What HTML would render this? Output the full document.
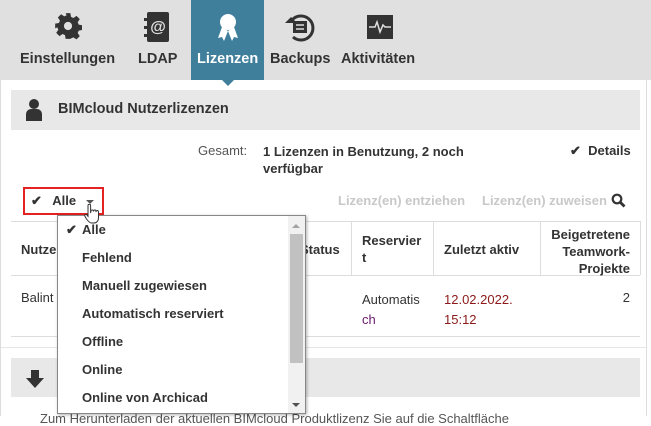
<!DOCTYPE html>
<html><head><meta charset="utf-8"><style>
*{margin:0;padding:0;box-sizing:border-box}
body{width:651px;height:416px;overflow:hidden;background:#fff;font-family:"Liberation Sans",sans-serif;color:#333;position:relative;font-size:13px}
.a{position:absolute;white-space:nowrap}
.b{font-weight:bold}
.nav{position:absolute;left:0;top:0;width:651px;height:80px;background:#e0e0e0}
.tab{position:absolute;top:51px;font-weight:bold;font-size:14.5px;color:#333}
.hl{position:absolute;background:#ddd}
.dd{position:absolute;left:57px;top:215px;width:249px;height:199px;background:#fff;border:1px solid #888;box-shadow:1px 1px 3px rgba(0,0,0,.3)}
.dd div{position:absolute;left:24px;font-weight:bold;font-size:13px;color:#333}
</style></head><body>
<div class="nav"></div>
<div class="a" style="left:191px;top:0;width:73px;height:80px;background:#3f7f9c"></div>
<div class="a" style="left:222px;top:80px;width:0;height:0;border-left:6px solid transparent;border-right:6px solid transparent;border-top:6px solid #3f7f9c"></div>
<svg class="a" style="left:54px;top:12px" width="28" height="28" viewBox="0 0 24 24"><path fill="#333" d="M10 1h4l.6 3.2 2 .9 2.7-1.8 2.8 2.8-1.8 2.7.9 2 3.2.6v4l-3.2.6-.9 2 1.8 2.7-2.8 2.8-2.7-1.8-2 .9L14 23h-4l-.6-3.2-2-.9-2.7 1.8-2.8-2.8 1.8-2.7-.9-2L1 14v-4l3.2-.6.9-2L3.3 4.7l2.8-2.8 2.7 1.8 2-.9z"/><circle cx="12" cy="12" r="3.5" fill="#e0e0e0"/></svg>
<svg class="a" style="left:143px;top:11px" width="28" height="32" viewBox="0 0 28 32"><rect x="4" y="1" width="22" height="30" rx="2" fill="#333"/><rect x="1" y="7" width="5" height="3" fill="#333"/><rect x="1" y="15" width="5" height="3" fill="#333"/><rect x="1" y="23" width="5" height="3" fill="#333"/><text x="15" y="21" font-size="16" font-weight="bold" fill="#e0e0e0" text-anchor="middle" font-family="Liberation Sans">@</text></svg>
<svg class="a" style="left:216px;top:13px" width="24" height="30" viewBox="0 0 24 30"><circle cx="12" cy="9" r="8" fill="#fff"/><path d="M6 14l-4 11 4-1 2 4 4-10zM18 14l4 11-4-1-2 4-4-10z" fill="#fff"/></svg>
<svg class="a" style="left:283px;top:11px" width="34" height="32" viewBox="0 0 34 32"><path d="M9 9a12 12 0 1 1 1 17" fill="none" stroke="#333" stroke-width="3"/><path d="M2 12l6-6 6 6z" fill="#333"/><rect x="10" y="10" width="14" height="12" fill="#333"/><path d="M13 14h8M13 18h8" stroke="#e0e0e0" stroke-width="1.5"/></svg>
<svg class="a" style="left:366px;top:14px" width="28" height="26" viewBox="0 0 28 26"><rect x="1" y="1" width="26" height="24" fill="#333"/><path d="M3 13h6l2-5 3 10 3-7 2 2h6" fill="none" stroke="#e0e0e0" stroke-width="1.5"/></svg>
<div class="tab" style="left:20px">Einstellungen</div>
<div class="tab" style="left:138px">LDAP</div>
<div class="tab" style="left:197px;color:#fff">Lizenzen</div>
<div class="tab" style="left:270px">Backups</div>
<div class="tab" style="left:341px">Aktivitäten</div>
<div class="a" style="left:0;top:80px;width:1px;height:336px;background:#ddd"></div>
<div class="a" style="left:646px;top:80px;width:1px;height:336px;background:#ddd"></div>
<div class="a" style="left:11px;top:90px;width:629px;height:40px;background:#e8e8e8"></div>
<svg class="a" style="left:25px;top:98px" width="18" height="24" viewBox="0 0 18 24"><circle cx="9" cy="6" r="5" fill="#333"/><path d="M1 23v-7a5 5 0 0 1 5-5h6a5 5 0 0 1 5 5v7z" fill="#333"/></svg>
<div class="a b" style="left:58px;top:101px;font-size:14.5px">BIMcloud Nutzerlizenzen</div>
<div class="a" style="left:198px;top:143px;color:#555">Gesamt:</div>
<div class="a b" style="left:263px;top:143px;line-height:17px">1 Lizenzen in Benutzung, 2 noch<br>verfügbar</div>
<div class="a b" style="left:570px;top:143px">✔&nbsp; Details</div>
<div class="a" style="left:23px;top:187px;width:81px;height:28px;border:2px solid #e52222"></div>
<div class="a b" style="left:31px;top:193px">✔&nbsp;&nbsp; Alle</div>
<div class="a" style="left:86px;top:200px;border-left:4px solid transparent;border-right:4px solid transparent;border-top:4px solid #555"></div>
<div class="a b" style="left:338px;top:193px;color:#c8c8c8">Lizenz(en) entziehen</div>
<div class="a b" style="left:482px;top:193px;color:#c8c8c8">Lizenz(en) zuweisen</div>
<svg class="a" style="left:611px;top:193px" width="15" height="15" viewBox="0 0 15 15"><circle cx="6" cy="6" r="4.3" fill="none" stroke="#333" stroke-width="2.2"/><path d="M9 9l4.5 4.5" stroke="#333" stroke-width="2.8"/></svg>
<div class="hl" style="left:11px;top:221px;width:629px;height:1px"></div>
<div class="hl" style="left:11px;top:275px;width:629px;height:1px"></div>
<div class="hl" style="left:11px;top:336px;width:629px;height:1px"></div>
<div class="hl" style="left:1px;top:347px;width:645px;height:1px;background:#e6e6e6"></div>
<div class="hl" style="left:351px;top:221px;width:1px;height:54px"></div>
<div class="hl" style="left:433px;top:221px;width:1px;height:54px"></div>
<div class="hl" style="left:540px;top:221px;width:1px;height:54px"></div>
<div class="hl" style="left:640px;top:221px;width:1px;height:54px"></div>
<div class="a b" style="left:21px;top:242px">Nutzer</div>
<div class="a b" style="left:300px;top:242px">Status</div>
<div class="a b" style="left:362px;top:232px;line-height:17px">Reservier<br>t</div>
<div class="a b" style="left:444px;top:242px">Zuletzt aktiv</div>
<div class="a b" style="left:540px;top:226px;width:90px;text-align:right;line-height:17px">Beigetretene<br>Teamwork-<br>Projekte</div>
<div class="a" style="left:21px;top:290px">Balint</div>
<div class="a" style="left:362px;top:290px;line-height:20px">Automatis<br><span style="color:#6a1a6a">ch</span></div>
<div class="a" style="left:444px;top:290px;line-height:20px;color:#8b1a1a">12.02.2022.<br>15:12</div>
<div class="a" style="left:540px;top:290px;width:90px;text-align:right">2</div>
<div class="a" style="left:11px;top:358px;width:629px;height:39px;background:#e8e8e8"></div>
<svg class="a" style="left:25px;top:369px" width="20" height="20" viewBox="0 0 20 20"><path d="M6 1h8v8h5l-9 10-9-10h5z" fill="#333"/></svg>
<div class="a" style="left:40px;top:411px;color:#555">Zum Herunterladen der aktuellen BIMcloud Produktlizenz Sie auf die Schaltfläche</div>
<div class="dd">
<span class="a b" style="left:8px;top:6px">✔</span>
<div style="top:6px">Alle</div>
<div style="top:34px">Fehlend</div>
<div style="top:62px">Manuell zugewiesen</div>
<div style="top:90px">Automatisch reserviert</div>
<div style="top:118px">Offline</div>
<div style="top:146px">Online</div>
<div style="top:174px">Online von Archicad</div>
<span class="a" style="left:230px;top:0;width:17px;height:197px;background:#f1f1f1"></span>
<span class="a" style="left:232px;top:18px;width:13px;height:129px;background:#c1c1c1"></span>
<span class="a" style="left:234px;top:8px;border-left:4px solid transparent;border-right:4px solid transparent;border-bottom:4px solid #a3a3a3"></span>
<span class="a" style="left:234px;top:187px;border-left:4px solid transparent;border-right:4px solid transparent;border-top:4px solid #505050"></span>
</div>
<svg class="a" style="left:84px;top:204px" width="16" height="20" viewBox="0 0 16 20"><path d="M4 1.5a1.3 1.3 0 0 1 2.6 0V9l.4-2a1.2 1.2 0 0 1 2.4.3l.2-.3a1.2 1.2 0 0 1 2.4.4l.2-.1a1.2 1.2 0 0 1 2.3.5V14c0 2.5-1.5 5-4.5 5H7.5C5.5 19 4 17 2.5 15L.8 12A1.2 1.2 0 0 1 2.8 10.8L4 12.3z" fill="#fff" stroke="#333" stroke-width="1"/></svg>
</body></html>
